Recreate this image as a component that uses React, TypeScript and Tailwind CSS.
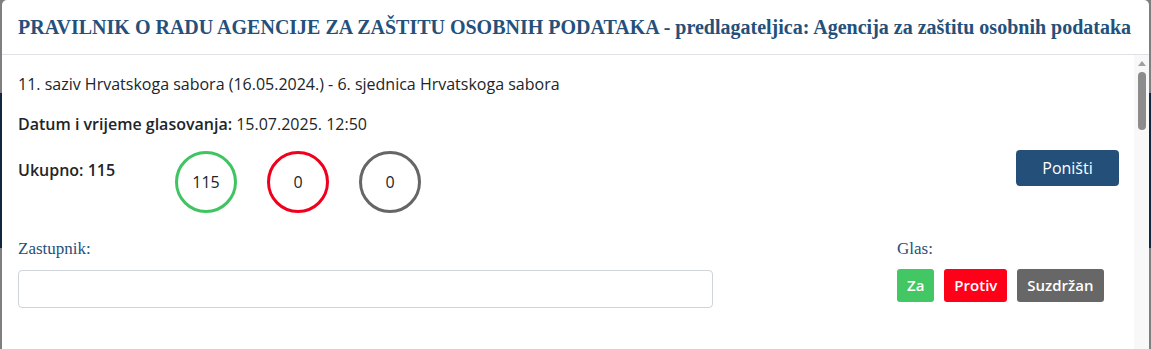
import React from "react";

const sans = { fontFamily: '"Open Sans", "Noto Sans", sans-serif' };

export default function App() {
  return (
    <div className="w-[1151px] h-[349px] overflow-hidden bg-[linear-gradient(to_bottom,#7f7f7f_0,#7f7f7f_93px,#10273f_93px,#10273f_248px,#7f7f7f_248px)] px-[2px]">
      <div className="h-full bg-white rounded-tl-[5px] rounded-tr-[5px] flex flex-col [font-family:'Open_Sans','Noto_Sans',sans-serif]">
        <div className="h-[55px] shrink-0 border-b border-[#dee2e6] flex items-center pl-[16px]">
          <h1 className="text-[20px] font-bold text-[#24507a] [font-family:'Liberation_Serif',serif] leading-none whitespace-nowrap">
            PRAVILNIK O RADU AGENCIJE ZA ZAŠTITU OSOBNIH PODATAKA - predlagateljica: Agencija za zaštitu osobnih podataka
          </h1>
        </div>
        <div className="flex-1 flex min-h-0">
          <div className="flex-1 pl-[16px] pr-[15px] pt-[17px] text-[#212529]" style={sans}>
            <div className="text-[16px] leading-[24px]">
              11. saziv Hrvatskoga sabora (16.05.2024.) - 6. sjednica Hrvatskoga sabora
            </div>
            <div className="text-[16px] leading-[24px] mt-[16px]">
              <span className="font-semibold">Datum i vrijeme glasovanja:</span> 15.07.2025. 12:50
            </div>
            <div className="flex mt-[15px] h-[62px]">
              <div className="w-[157px] font-semibold text-[16px] leading-[24px] pt-[7px]">Ukupno: 115</div>
              <div className="flex gap-[30px]">
                <div className="w-[62px] h-[62px] rounded-full border-[3px] border-[#40c462] flex items-center justify-center text-[16px]">115</div>
                <div className="w-[62px] h-[62px] rounded-full border-[3px] border-[#f0001c] flex items-center justify-center text-[16px]">0</div>
                <div className="w-[62px] h-[62px] rounded-full border-[3px] border-[#666666] flex items-center justify-center text-[16px]">0</div>
              </div>
              <div className="flex-1 flex justify-end">
                <button className="w-[103px] h-[36px] -mt-[1px] rounded-[4px] bg-[#244f79] text-white text-[16px]">Poništi</button>
              </div>
            </div>
            <div className="flex mt-[24px]">
              <div className="w-[695px]">
                <div className="text-[17px] leading-[24px] text-[#24507a] [font-family:'Liberation_Serif',serif]">Zastupnik:</div>
                <input className="mt-[9px] w-full h-[38px] rounded-[4px] border border-[#ced4da] outline-none" />
              </div>
              <div className="ml-[184px]">
                <div className="text-[17px] leading-[24px] text-[#24507a] [font-family:'Liberation_Serif',serif]">Glas:</div>
                <div className="flex gap-[10px] mt-[8px]">
                  <button className="h-[33px] px-[10px] rounded-[3px] bg-[#43c664] text-white text-[15px] font-semibold">Za</button>
                  <button className="h-[33px] px-[10px] rounded-[3px] bg-[#ff0019] text-white text-[15px] font-semibold">Protiv</button>
                  <button className="h-[33px] px-[10px] rounded-[3px] bg-[#676767] text-white text-[15px] font-semibold">Suzdržan</button>
                </div>
              </div>
            </div>
          </div>
          <div className="w-[15px] bg-[#f8f8f8] flex flex-col items-center pt-[6px]">
            <div className="w-0 h-0 border-l-[4px] border-r-[4px] border-b-[5px] border-l-transparent border-r-transparent border-b-[#a0a0a0]"></div>
            <div className="mt-[6px] w-[8px] h-[58px] rounded-[4px] bg-[#8c8c8c]"></div>
          </div>
        </div>
      </div>
    </div>
  );
}
